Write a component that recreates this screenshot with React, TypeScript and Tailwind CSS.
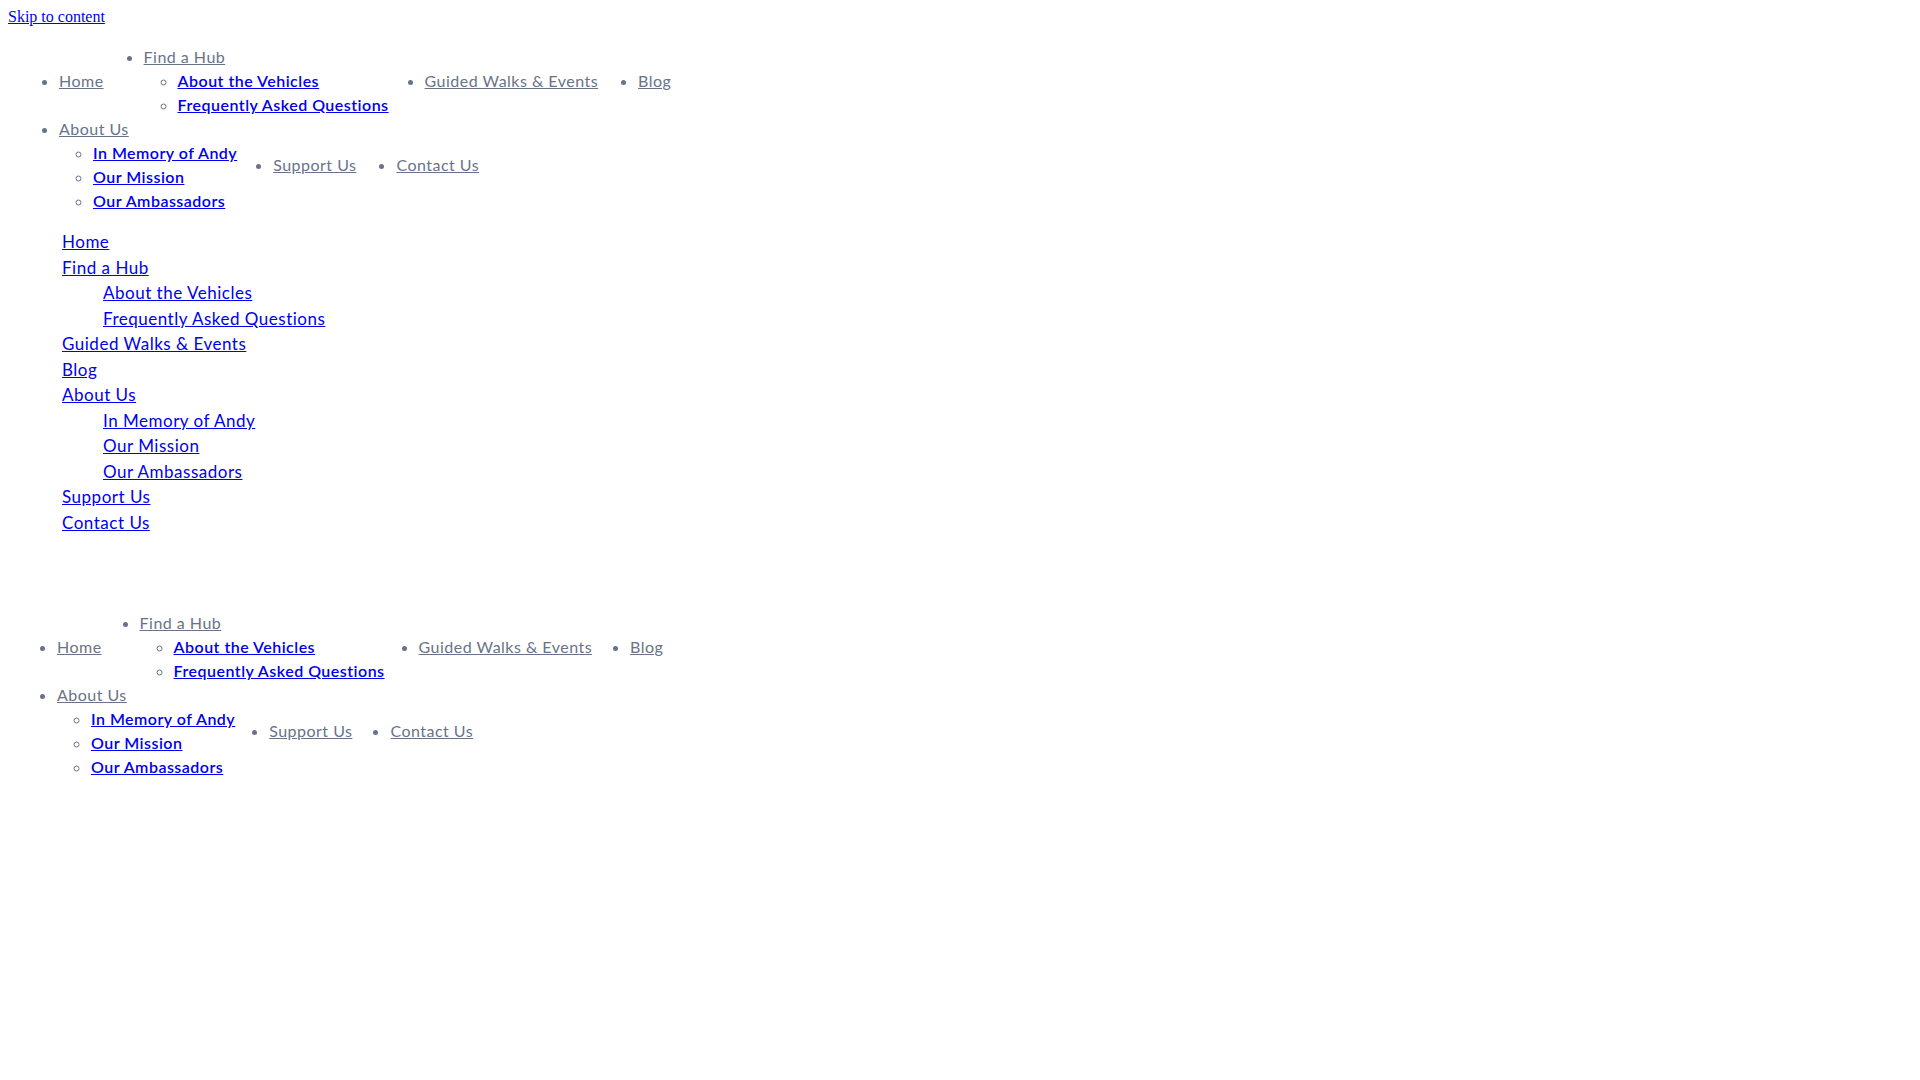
import React from "react";

type Item = { label: string; children?: string[] };

const menu: Item[] = [
  { label: "Home" },
  { label: "Find a Hub", children: ["About the Vehicles", "Frequently Asked Questions"] },
  { label: "Guided Walks & Events" },
  { label: "Blog" },
  { label: "About Us", children: ["In Memory of Andy", "Our Mission", "Our Ambassadors"] },
  { label: "Support Us" },
  { label: "Contact Us" },
];

function HeaderMenu({ className }: { className: string }) {
  return (
    <ul
      className={
        "flex w-[820px] list-outside list-disc flex-wrap items-center text-base leading-6 tracking-[0.03em] text-[#687389] " +
        className
      }
    >
      {menu.map((item) => (
        <li key={item.label} className={item.children ? "-mr-[4px]" : ""}>
          <a href="#" className="underline">
            {item.label}
          </a>
          {item.children && (
            <ul className="list-outside list-[circle] pl-[34px]">
              {item.children.map((c) => (
                <li key={c}>
                  <a href="#" className="font-semibold text-[#0000ee] underline">
                    {c}
                  </a>
                </li>
              ))}
            </ul>
          )}
        </li>
      ))}
    </ul>
  );
}

function MobileMenu() {
  return (
    <ul className="mt-[16px] list-none pl-[62px] text-[17px] leading-[25.5px] tracking-[0.03em] text-[#0000ee]">
      {menu.map((item) => (
        <li key={item.label}>
          <a href="#" className="underline">
            {item.label}
          </a>
          {item.children && (
            <ul className="list-none pl-[41px]">
              {item.children.map((c) => (
                <li key={c}>
                  <a href="#" className="underline">
                    {c}
                  </a>
                </li>
              ))}
            </ul>
          )}
        </li>
      ))}
    </ul>
  );
}

export default function App() {
  return (
    <div className="min-h-screen bg-white font-['Lato','Open_Sans',sans-serif]">
      <div className="pl-2 pt-[5px] font-['Liberation_Serif',serif] text-base leading-6 text-[#0000ee]">
        <a href="#" className="underline">
          Skip to content
        </a>
      </div>

      {/* desktop header */}
      <nav className="mt-[16px]">
        <HeaderMenu className="gap-x-10 pl-[59px]" />
      </nav>

      {/* mobile nav, unstyled */}
      <MobileMenu />

      {/* sticky header copy */}
      <nav className="mt-[76px]">
        <HeaderMenu className="gap-x-[38px] pl-[57px]" />
      </nav>
    </div>
  );
}
